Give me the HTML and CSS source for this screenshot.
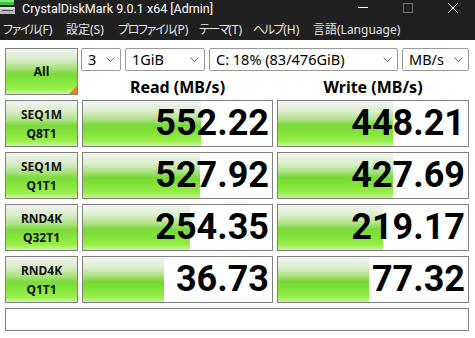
FILE: index.html
```html
<!DOCTYPE html>
<html lang="ja">
<head>
<meta charset="utf-8">
<title>CrystalDiskMark</title>
<link rel="stylesheet" href="styles.css">
</head>
<body>
<div class="titlebar">
  <svg class="appicon" width="15" height="15" viewBox="0 0 15 15">
    <rect x="0" y="0" width="14" height="5" fill="#3cc43c"/>
    <rect x="0" y="0" width="14" height="2" fill="#7ee87e"/>
    <rect x="0" y="7" width="15" height="7" fill="#b8b8b8"/>
    <rect x="0" y="7" width="15" height="2" fill="#e0e0e0"/>
    <rect x="2" y="10" width="11" height="1" fill="#555"/>
  </svg>
  <span class="title">CrystalDiskMark 9.0.1 x64 [Admin]</span>
  <div class="winctl">
    <svg class="ctl" width="45" height="20" viewBox="0 0 45 20"><line x1="18" y1="7.5" x2="28" y2="7.5" stroke="#fff" stroke-width="1"/></svg>
    <svg class="ctl" width="45" height="20" viewBox="0 0 45 20"><rect x="18.5" y="3.5" width="9" height="9" fill="none" stroke="#6e6e6e" stroke-width="1"/></svg>
    <svg class="ctl" width="45" height="20" viewBox="0 0 45 20"><path d="M18 3 L28 13 M28 3 L18 13" stroke="#fff" stroke-width="1" fill="none"/></svg>
  </div>
</div>
<nav class="menubar">
  <span class="m1"><span class="k">ファイル</span>(F)</span>
  <span class="m2">設定(S)</span>
  <span class="m3"><span class="k">プロファイル</span>(P)</span>
  <span class="m4"><span class="k">テーマ</span>(T)</span>
  <span class="m5"><span class="k">ヘルプ</span>(H)</span>
  <span class="m6">言語(Language)</span>
</nav>
<main class="grid">
  <div class="btn all">All<span class="corner"></span></div>
  <div class="topright">
    <div class="combos">
      <div class="combo c1"><span>3</span><svg width="9" height="5" viewBox="0 0 9 5"><polyline points="0.5,0.5 4.5,4.5 8.5,0.5" fill="none" stroke="#666" stroke-width="1"/></svg></div>
      <div class="combo c2"><span>1GiB</span><svg width="9" height="5" viewBox="0 0 9 5"><polyline points="0.5,0.5 4.5,4.5 8.5,0.5" fill="none" stroke="#666" stroke-width="1"/></svg></div>
      <div class="combo c3"><span>C: 18% (83/476GiB)</span><svg width="9" height="5" viewBox="0 0 9 5"><polyline points="0.5,0.5 4.5,4.5 8.5,0.5" fill="none" stroke="#666" stroke-width="1"/></svg></div>
      <div class="combo c4"><span>MB/s</span><svg width="9" height="5" viewBox="0 0 9 5"><polyline points="0.5,0.5 4.5,4.5 8.5,0.5" fill="none" stroke="#666" stroke-width="1"/></svg></div>
    </div>
    <div class="heads">
      <div class="head">Read (MB/s)</div>
      <div class="head">Write (MB/s)</div>
    </div>
  </div>

  <div class="btn label">SEQ1M<br>Q8T1</div>
  <div class="val" style="--w:118px">552.22</div>
  <div class="val" style="--w:115px">448.21</div>

  <div class="btn label">SEQ1M<br>Q1T1</div>
  <div class="val" style="--w:117px">527.92</div>
  <div class="val" style="--w:115px">427.69</div>

  <div class="btn label">RND4K<br>Q32T1</div>
  <div class="val" style="--w:107px">254.35</div>
  <div class="val" style="--w:105px">219.17</div>

  <div class="btn label">RND4K<br>Q1T1</div>
  <div class="val" style="--w:81px">36.73</div>
  <div class="val" style="--w:91px">77.32</div>

  <div class="status"></div>
</main>
</body>
</html>
```
FILE: styles.css
```css
* { box-sizing: border-box; }
html, body { margin: 0; padding: 0; }
body {
  width: 475px;
  height: 338px;
  overflow: hidden;
  background: #ffffff;
  font-family: "Noto Sans", "Noto Sans CJK JP", sans-serif;
}
.titlebar {
  height: 20px;
  background: #202020;
  display: flex;
  align-items: center;
  position: relative;
}
.appicon { margin: 0 7px 0 0; align-self: flex-start; }
.title {
  color: #ffffff;
  font-family: Roboto, "Noto Sans", sans-serif;
  font-size: 12.5px;
  line-height: 20px;
  margin-top: -2px;
}
.winctl {
  margin-left: auto;
  display: flex;
  align-self: flex-start;
}
.ctl { display: block; }
.menubar {
  height: 20px;
  background: #202020;
  display: flex;
  align-items: center;
  padding-left: 3px;
  color: #e4e4e4;
  font-family: "Noto Sans", "Noto Sans CJK JP", sans-serif;
  font-feature-settings: "palt";
  font-size: 12px;
  line-height: 20px;
  white-space: nowrap;
}
.menubar > span { display: block; flex: none; }
.menubar .k { letter-spacing: -1.4px; }
.m1 { width: 63px; }
.m2 { width: 52px; }
.m3 { width: 81px; }
.m4 { width: 54px; }
.m5 { width: 60px; }
.grid {
  display: grid;
  grid-template-columns: 73px 191px 192px;
  grid-template-rows: repeat(5, 47px) 23px;
  column-gap: 4px;
  row-gap: 5px;
  padding: 8px 0 0 5px;
}
.btn {
  border: 1px solid #808080;
  background: linear-gradient(to bottom, #f2f3f1 0%, #d8ecc8 24%, #ace282 42%, #7cda3c 55%, #86e63c 72%, #98ef48 88%, #c8f5a2 100%);
  font-weight: 700;
  font-size: 12px;
  color: #111;
  text-align: center;
  display: flex;
  align-items: center;
  justify-content: center;
}
.all { position: relative; font-size: 12.5px; }
.corner {
  position: absolute;
  right: 0;
  bottom: 0;
  width: 0;
  height: 0;
  border-style: solid;
  border-width: 0 0 8px 8px;
  border-color: transparent transparent #f07a1e transparent;
}
.label { line-height: 19px; padding-top: 1px; }
.topright {
  grid-column: 2 / 4;
  display: flex;
  flex-direction: column;
}
.combos {
  display: flex;
  gap: 4px;
  height: 23px;
  margin-left: -1px;
}
.combo {
  height: 23px;
  border: 1px solid #9a9a9a;
  border-radius: 2px;
  background: #fff;
  display: flex;
  align-items: center;
  justify-content: space-between;
  padding: 0 5px 0 6px;
  font-size: 14.5px;
  color: #000;
}
.combo span { line-height: 21px; margin-top: -1px; }
.c1 { width: 40px; }
.c2 { width: 80px; }
.c3 { width: 189px; }
.c4 { width: 67px; }
.heads {
  display: grid;
  grid-template-columns: 191px 192px;
  column-gap: 4px;
  margin-top: 9px;
}
.head {
  text-align: center;
  font-weight: 700;
  font-size: 16px;
  line-height: 15px;
  color: #000;
}
.val {
  border: 1px solid #808080;
  background-color: #fff;
  background-image: linear-gradient(to bottom, #f4f5f3 0%, #daedca 24%, #aae180 42%, #78d836 55%, #84e43a 72%, #96ed46 88%, #c6f3a0 100%);
  background-repeat: no-repeat;
  background-size: var(--w) 100%;
  text-align: right;
  padding-right: 3px;
  font-family: Roboto, "Noto Sans", sans-serif;
  font-weight: 700;
  font-size: 36px;
  line-height: 45px;
  color: #000;
}
.status {
  grid-column: 1 / 4;
  border: 1px solid #808080;
  background: #fff;
}
```
